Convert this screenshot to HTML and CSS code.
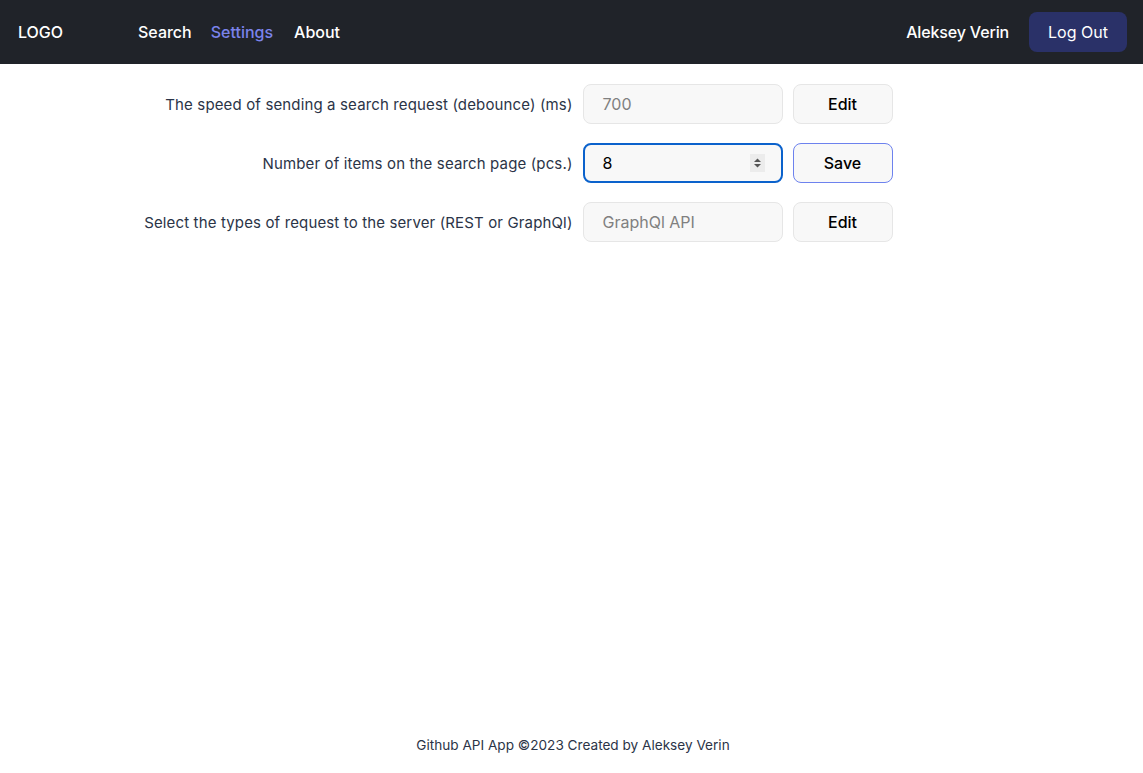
FILE: index.html
```html
<!DOCTYPE html>
<html lang="en">
<head>
<meta charset="utf-8">
<title>Github API App</title>
<link rel="stylesheet" href="styles.css">
</head>
<body>
<div class="app">
  <header class="header">
    <div class="logo">LOGO</div>
    <nav class="nav">
      <a class="nav-link" href="#">Search</a>
      <a class="nav-link active" href="#">Settings</a>
      <a class="nav-link" href="#">About</a>
    </nav>
    <div class="user">
      <span class="user-name">Aleksey Verin</span>
      <button class="logout">Log Out</button>
    </div>
  </header>
  <main class="main">
    <div class="settings">
      <div class="row">
        <label class="label">The speed of sending a search request (debounce) (ms)</label>
        <div class="controls">
          <div class="field disabled">700</div>
          <button class="btn">Edit</button>
        </div>
      </div>
      <div class="row">
        <label class="label">Number of items on the search page (pcs.)</label>
        <div class="controls">
          <div class="field focused">
            <span>8</span>
            <span class="spinner">
              <svg width="9" height="12" viewBox="0 0 9 12"><path d="M4.5 1.5 L8 5 H1 Z" fill="#555"/><path d="M4.5 10.5 L8 7 H1 Z" fill="#555"/></svg>
            </span>
          </div>
          <button class="btn btn-save">Save</button>
        </div>
      </div>
      <div class="row">
        <label class="label">Select the types of request to the server (REST or GraphQl)</label>
        <div class="controls">
          <div class="field disabled">GraphQl API</div>
          <button class="btn">Edit</button>
        </div>
      </div>
    </div>
  </main>
  <footer class="footer">Github API App ©2023 Created by Aleksey Verin</footer>
</div>
</body>
</html>
```
FILE: styles.css
```css
* { box-sizing: border-box; }
html, body { margin: 0; padding: 0; }
body {
  font-family: Inter, "Noto Sans", sans-serif;
  color: #2b3447;
  background: #fff;
}
.app {
  min-height: 773px;
  display: flex;
  flex-direction: column;
}
.header {
  height: 64px;
  background: #202329;
  display: flex;
  align-items: center;
  padding: 0 16px 0 18px;
}
.logo {
  color: #fff;
  font-size: 16px;
  font-weight: 500;
  width: 120px;
}
.nav {
  display: flex;
  gap: 20px;
  flex: 1;
}
.nav-link {
  color: #fff;
  text-decoration: none;
  font-size: 16px;
  font-weight: 500;
}
.nav-link:first-child { margin-right: -1px; }
.nav-link.active { color: #7b83eb; margin-right: 1px; }
.user {
  display: flex;
  align-items: center;
  gap: 20px;
}
.user-name {
  color: #fff;
  font-size: 16px;
  font-weight: 500;
  letter-spacing: -0.15px;
}
.logout {
  font-family: inherit;
  font-size: 16px;
  font-weight: 400;
  color: #fff;
  background: #2a3168;
  border: none;
  border-radius: 8px;
  height: 40px;
  width: 98px;
}
.main { flex: 1; }
.settings {
  display: flex;
  flex-direction: column;
  gap: 19px;
  padding-top: 20px;
}
.row {
  display: grid;
  grid-template-columns: 1fr 1fr;
  align-items: center;
}
.label {
  text-align: right;
  font-size: 15px;
  letter-spacing: 0.14px;
  color: #2b3447;
  margin-right: -1px;
}
.controls {
  display: flex;
  gap: 10px;
  padding-left: 11px;
}
.field {
  width: 200px;
  height: 40px;
  border: 1px solid #e6e6e6;
  border-radius: 8px;
  background: #f8f8f8;
  display: flex;
  align-items: center;
  justify-content: space-between;
  padding: 0 19px;
  font-size: 16px;
  color: #000;
}
.field.disabled { color: #808080; }
.field.focused {
  border: 2px solid #0b62cc;
  padding: 0 18px;
}
.spinner {
  width: 15px;
  height: 18px;
  background: #ececec;
  display: flex;
  align-items: center;
  justify-content: center;
  margin-right: -2px;
}
.btn {
  width: 100px;
  height: 40px;
  font-family: inherit;
  font-size: 16px;
  font-weight: 500;
  color: #000;
  background: #f8f8f8;
  border: 1px solid #e6e6e6;
  border-radius: 8px;
}
.btn-save { border-color: #6d82ee; }
.footer {
  text-align: center;
  font-size: 13.6px;
  color: #2b3447;
  padding: 20px 0 20px;
  margin-left: 3px;
}
```
